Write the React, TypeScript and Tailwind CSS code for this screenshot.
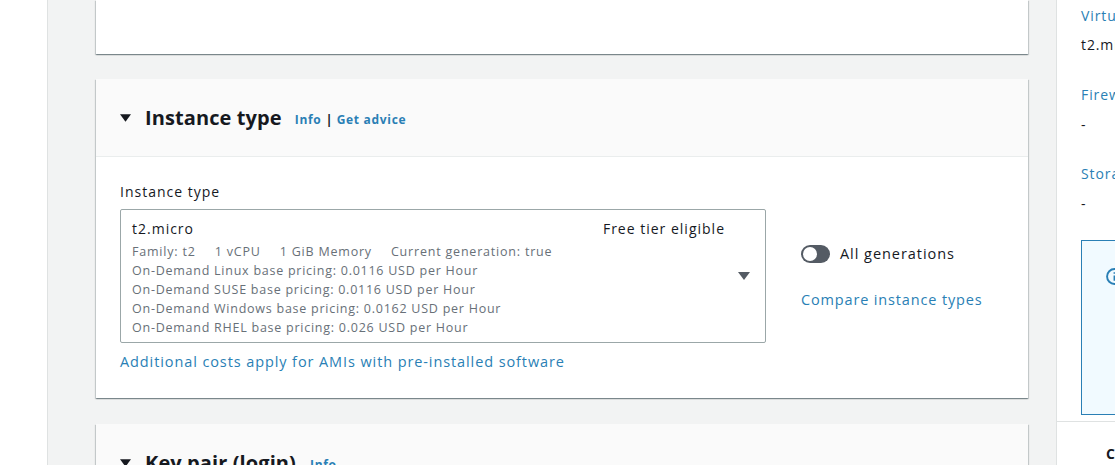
import type { JSX } from 'react'

const font = { fontFamily: '"Open Sans", "Noto Sans", sans-serif' }

function Caret({ className }: { className?: string }) {
  return (
    <svg viewBox="0 0 12 8" className={className} fill="currentColor">
      <path d="M0 0h12L6 8z" />
    </svg>
  )
}

const pricing = [
  'On-Demand Linux base pricing: 0.0116 USD per Hour',
  'On-Demand SUSE base pricing: 0.0116 USD per Hour',
  'On-Demand Windows base pricing: 0.0162 USD per Hour',
  'On-Demand RHEL base pricing: 0.026 USD per Hour',
]

const cardShadow =
  'shadow-[0_1px_1px_0_rgba(0,28,36,0.3),1px_1px_1px_0_rgba(0,28,36,0.15),-1px_1px_1px_0_rgba(0,28,36,0.15)]'

function App(): JSX.Element {
  return (
    <div className="flex h-[465px] w-[1115px] overflow-hidden bg-white text-[#16191f]" style={font}>
      {/* left rail */}
      <div className="w-[48px] shrink-0 border-r border-[#dfe2e2] bg-white" />

      {/* main column */}
      <main className="w-[1008px] shrink-0 bg-[#f2f3f3] pl-12 pr-[28px]">
        {/* previous card (cut off at top) */}
        <div className={`h-[54px] w-[932px] bg-white ${cardShadow}`} />

        {/* Instance type card */}
        <section className={`mt-[25px] w-[932px] bg-white ${cardShadow}`}>
          <header className="flex h-[78px] items-center border-b border-[#eaeded] bg-[#fafafa] pl-6 pt-[1px]">
            <Caret className="h-[8px] w-[11px] text-[#16191f]" />
            <h2 className="ml-[14px] text-[20px] font-bold leading-[28px] tracking-[0.1px]">Instance type</h2>
            <span className="ml-[13px] mt-[3px] text-[12px] font-bold tracking-[0.7px] text-[#2a7fb5]">Info</span>
            <span className="mx-[4px] mt-[3px] text-[13px] font-bold">|</span>
            <span className="mt-[3px] text-[12px] font-bold tracking-[0.7px] text-[#2a7fb5]">Get advice</span>
          </header>

          <div className="px-6 pb-[25px] pt-[24px]">
            <div className="text-[14px] leading-[22px] tracking-[1px]">Instance type</div>
            <div className="mt-[6px] flex gap-[35px]">
              <div className="w-[646px] shrink-0">
                <div className="flex h-[134px] w-[646px] items-center rounded-[2px] border border-[#9ba7a8] pl-[11px] pr-[15px]">
                  <div className="flex-1 self-start pt-[8px]">
                    <div className="flex justify-between text-[14px] leading-[22px] tracking-[1px]">
                      <span>t2.micro</span>
                      <span>Free tier eligible</span>
                    </div>
                    <div className="mt-[2px] flex gap-[19px] text-[12.5px] leading-[19px] tracking-[0.8px] text-[#687078]">
                      <span>Family: t2</span>
                      <span>1 vCPU</span>
                      <span>1 GiB Memory</span>
                      <span>Current generation: true</span>
                    </div>
                    {pricing.map((p) => (
                      <div key={p} className="text-[12.5px] leading-[19px] tracking-[0.75px] text-[#687078]">
                        {p}
                      </div>
                    ))}
                  </div>
                  <Caret className="ml-[13px] h-[8px] w-[12px] text-[#545b64]" />
                </div>
                <div className="mt-[8px] text-[14.5px] leading-[22px] tracking-[0.9px] text-[#2a7fb5]">
                  Additional costs apply for AMIs with pre-installed software
                </div>
              </div>

              <div className="w-[220px] shrink-0 pt-[34px]">
                <div className="flex items-center gap-[10px]">
                  <div className="flex h-[18px] w-[29px] items-center rounded-full bg-[#545b64] p-[2px]">
                    <div className="h-[14px] w-[14px] rounded-full bg-white" />
                  </div>
                  <span className="text-[14.5px] leading-[22px] tracking-[0.95px]">All generations</span>
                </div>
                <div className="mt-[24px] text-[14.5px] leading-[22px] tracking-[0.85px] text-[#2a7fb5]">Compare instance types</div>
              </div>
            </div>
          </div>
        </section>

        {/* Key pair card (cut off at bottom) */}
        <section className={`mt-[26px] w-[932px] bg-[#fafafa] ${cardShadow}`}>
          <header className="flex h-[78px] items-center pl-6">
            <Caret className="h-[8px] w-[11px] text-[#16191f]" />
            <h2 className="ml-[14px] text-[20px] font-bold leading-[28px] tracking-[0.1px]">Key pair (login)</h2>
            <span className="ml-[14px] mt-[3px] text-[12px] font-bold tracking-[0.7px] text-[#2a7fb5]">Info</span>
          </header>
        </section>
      </main>

      {/* summary panel */}
      <aside className="flex-1 overflow-hidden border-l border-[#dfe2e2] bg-white">
        <div className="w-[340px] pl-6">
          <div className="pt-[5px] text-[14px] leading-[22px] tracking-[0.9px] text-[#2a7fb5]">Virtual server type (instance type)</div>
          <div className="mt-[7px] text-[14px] leading-[22px] tracking-[0.9px]">t2.micro</div>
          <div className="mt-[28px] text-[14px] leading-[22px] tracking-[0.9px] text-[#2a7fb5]">Firewall (security group)</div>
          <div className="mt-[8px] text-[14px] leading-[22px]">-</div>
          <div className="mt-[27px] text-[14px] leading-[22px] tracking-[0.9px] text-[#2a7fb5]">Storage (volumes)</div>
          <div className="mt-[8px] text-[14px] leading-[22px]">-</div>
          <div className="mt-[25px] h-[175px] w-[290px] border border-[#2a7fb5] bg-[#f1faff] pl-6 pt-[27px]">
            <svg viewBox="0 0 16 16" className="h-[17px] w-[17px] text-[#2a7fb5]" fill="none" stroke="currentColor" strokeWidth="1.8">
              <circle cx="8" cy="8" r="7" />
              <path d="M8 7v5M8 4v1.5" />
            </svg>
          </div>
        </div>
        <div className="mt-[6px] border-t border-[#dfe2e2] pl-[49px] pt-[21px] text-[14px] font-bold leading-[22px]">
          Cancel
        </div>
      </aside>
    </div>
  )
}

export default App
